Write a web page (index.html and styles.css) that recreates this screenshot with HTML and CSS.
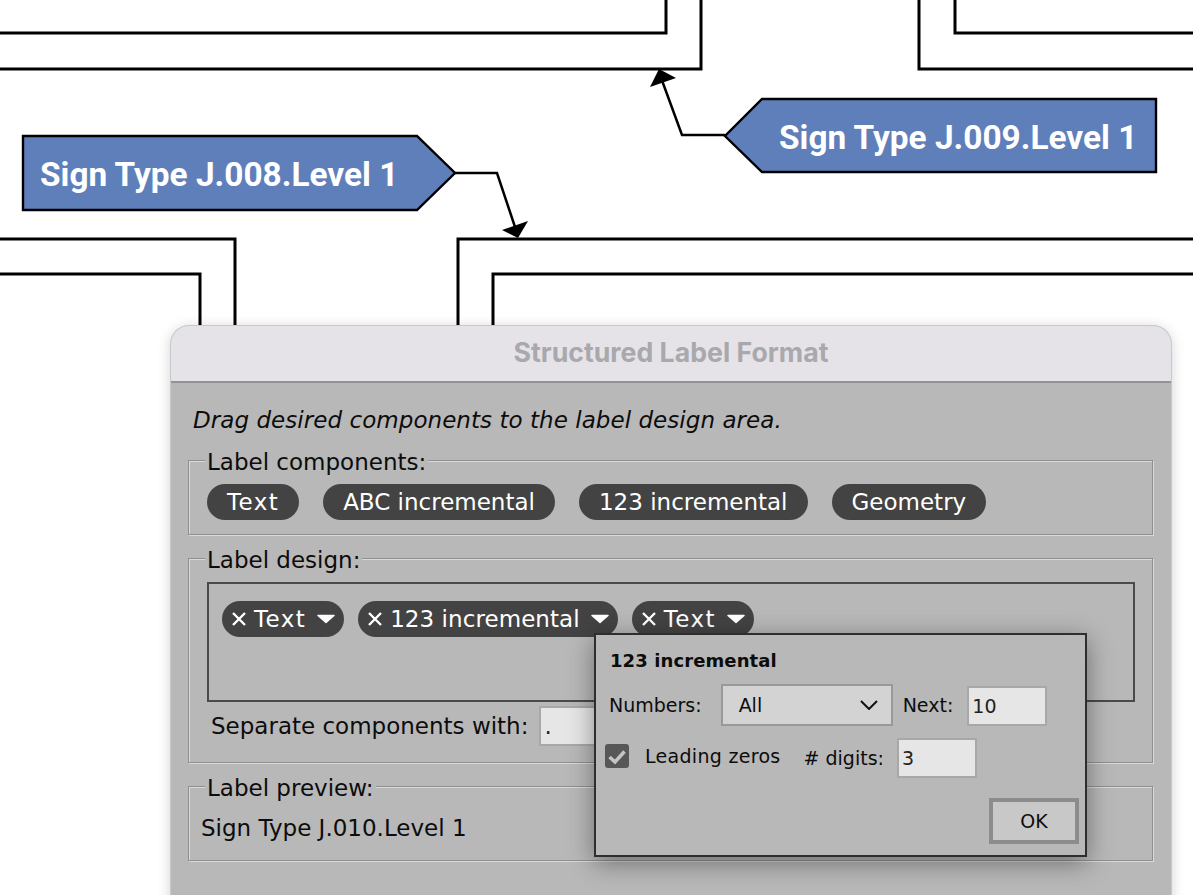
FILE: index.html
```html
<!DOCTYPE html>
<html lang="en">
<head>
<meta charset="utf-8">
<title>Structured Label Format</title>
<link rel="stylesheet" href="styles.css">
</head>
<body>
<div class="canvas">
  <svg class="diagram" width="1193" height="895" viewBox="0 0 1193 895">
    <g class="wall">
      <polyline points="0,33 666,33 666,0"/>
      <polyline points="0,69 701,69 701,0"/>
      <polyline points="955,0 955,33 1193,33"/>
      <polyline points="919,0 919,69 1193,69"/>
      <polyline points="0,239 235,239 235,330"/>
      <polyline points="0,274 200,274 200,330"/>
      <polyline points="1193,239 458,239 458,330"/>
      <polyline points="1193,274 493,274 493,330"/>
    </g>
    <polyline class="leader" points="725,135 682,135 660,75"/>
    <polygon class="head" points="659,69 676,78 650,87"/>
    <polyline class="leader" points="455,173 497,173 516,230"/>
    <polygon class="head" points="518,238 502,230 528,221"/>
    <polygon class="sign" points="23,136 417,136 455,173 417,210 23,210"/>
    <polygon class="sign" points="1156,99 762,99 725,136 762,172 1156,172"/>
    <text class="sign-text" x="40" y="186">Sign Type J.008.Level 1</text>
    <text class="sign-text" x="779" y="149">Sign Type J.009.Level 1</text>
  </svg>

  <section class="dialog">
    <header class="titlebar">Structured Label Format</header>
    <div class="body">
      <p class="hint">Drag desired components to the label design area.</p>

      <div class="group group-components">
        <span class="legend">Label components:</span>
        <div class="chips chips-wide">
          <span class="chip"><span class="spaced">Text</span></span>
          <span class="chip">ABC incremental</span>
          <span class="chip">123 incremental</span>
          <span class="chip">Geometry</span>
        </div>
      </div>

      <div class="group group-design">
        <span class="legend">Label design:</span>
        <div class="design-area">
          <div class="chips chips-tight">
            <span class="chip chip-edit">
              <svg class="x" width="14" height="14" viewBox="0 0 14 14"><path d="M1 1 13 13M13 1 1 13"/></svg>
              <span class="spaced">Text</span>
              <svg class="tri" width="20" height="10" viewBox="0 0 20 10"><path d="M2 1.5H18L10 8.5Z"/></svg>
            </span>
            <span class="chip chip-edit">
              <svg class="x" width="14" height="14" viewBox="0 0 14 14"><path d="M1 1 13 13M13 1 1 13"/></svg>
              <span class="stretched">123 incremental</span>
              <svg class="tri" width="20" height="10" viewBox="0 0 20 10"><path d="M2 1.5H18L10 8.5Z"/></svg>
            </span>
            <span class="chip chip-edit">
              <svg class="x" width="14" height="14" viewBox="0 0 14 14"><path d="M1 1 13 13M13 1 1 13"/></svg>
              <span class="spaced">Text</span>
              <svg class="tri" width="20" height="10" viewBox="0 0 20 10"><path d="M2 1.5H18L10 8.5Z"/></svg>
            </span>
          </div>
        </div>
        <div class="separator">
          <span>Separate components with:</span>
          <span class="field field-sep">.</span>
        </div>
      </div>

      <div class="group group-preview">
        <span class="legend">Label preview:</span>
        <p class="preview">Sign Type J.010.Level 1</p>
      </div>
    </div>

    <div class="popup">
      <h2 class="popup-title">123 incremental</h2>
      <div class="popup-row row-numbers">
        <span>Numbers:</span>
        <span class="select">All
          <svg width="18" height="10" viewBox="0 0 18 10"><path d="M1 1 9 9 17 1"/></svg>
        </span>
        <span>Next:</span>
        <span class="field field-num">10</span>
      </div>
      <div class="popup-row row-zeros">
        <span class="check">
          <svg width="24" height="24" viewBox="0 0 24 24"><path d="M4.5 13 10 18 19.5 7.5"/></svg>
        </span>
        <span class="zeros-label">Leading zeros</span>
        <span class="digits-label"># digits:</span>
        <span class="field field-num">3</span>
      </div>
      <div class="popup-actions">
        <span class="ok">OK</span>
      </div>
    </div>
  </section>
</div>
</body>
</html>
```
FILE: styles.css
```css
* { box-sizing: border-box; }

html, body {
  margin: 0;
  padding: 0;
  background: #fff;
}

.canvas {
  position: relative;
  width: 1193px;
  height: 895px;
  overflow: hidden;
  font-family: "DejaVu Sans", sans-serif;
  font-size: 23px;
  color: #0c0c0c;
}

.diagram { position: absolute; left: 0; top: 0; }

.wall polyline, .leader {
  fill: none;
  stroke: #000;
  stroke-width: 3;
}
.leader { stroke-width: 2.5; }
.head { fill: #000; }
.sign {
  fill: #5f7fbb;
  stroke: #000;
  stroke-width: 2.4;
}
.sign-text {
  font-family: Roboto, sans-serif;
  font-weight: 700;
  font-size: 33.4px;
  fill: #fff;
}

/* Dialog window */
.dialog {
  position: absolute;
  left: 171px;
  top: 326px;
  width: 1000px;
  height: 600px;
  border-radius: 18px 18px 0 0;
  background: #b8b8b8;
  box-shadow: 0 0 0 1px #c9c9c9, 0 2px 14px rgba(0, 0, 0, .2);
}

.titlebar {
  height: 57px;
  background: #e5e3e8;
  border-bottom: 2px solid #929292;
  border-radius: 18px 18px 0 0;
  text-align: center;
  font-family: Inter, sans-serif;
  font-weight: 700;
  font-size: 26.7px;
  line-height: 52px;
  color: #a9a8ad;
}

.body {
  padding: 0 17px;
  display: flex;
  flex-direction: column;
}

.hint {
  margin: 23px 0 0 5px;
  height: 28px;
  line-height: 28px;
  font-style: italic;
  letter-spacing: .05px;
  white-space: nowrap;
}

.group {
  position: relative;
  display: flex;
  flex-direction: column;
  border: 1px solid #8f8f8f;
  box-shadow: 1px 1px 0 #dadada, inset 1px 1px 0 #dadada;
  width: 965px;
}
.group-components { height: 75px; margin-top: 26px; }
.group-design { height: 205px; margin-top: 23px; }
.group-preview { height: 75px; margin-top: 23px; }

.legend {
  align-self: flex-start;
  margin: -13px 0 0 16px;
  padding: 0 2px;
  height: 28px;
  line-height: 28px;
  background: #b8b8b8;
  white-space: nowrap;
}

.chips { display: flex; }
.chips-wide { gap: 24px; margin: 8px 0 0 18px; }
.chips-tight { gap: 14px; padding: 17px 0 0 13px; }

.chip {
  display: inline-flex;
  align-items: center;
  justify-content: center;
  height: 36px;
  padding: 0 20px;
  border-radius: 18px;
  background: #434343;
  color: #fff;
  white-space: nowrap;
}
.chip-edit {
  gap: 8px;
  padding: 0 8px 0 10px;
}
.spaced { letter-spacing: 1.4px; }
.stretched { letter-spacing: .07px; }
.x { fill: none; stroke: #fff; stroke-width: 2.4; }
.tri {
  fill: #fff;
  stroke: #fff;
  stroke-width: 1.5;
  stroke-linejoin: round;
  margin-left: 2px;
}

.design-area {
  width: 928px;
  height: 120px;
  margin: 8px 0 0 18px;
  border: 2px solid #4a4a4a;
}

.separator {
  display: flex;
  align-items: center;
  gap: 11px;
  margin: 4px 0 0 22px;
}

.field {
  display: flex;
  align-items: center;
  background: #e6e6e6;
  border: 2px solid #a8a8a8;
  padding-left: 3px;
  color: #222;
}
.field-sep { width: 100px; height: 40px; }
.field-num { width: 80px; height: 40px; }

.preview {
  margin: 12px 0 0 12px;
  height: 28px;
  line-height: 28px;
  white-space: nowrap;
}

/* Popup over the dialog */
.popup {
  position: absolute;
  left: 423px;
  top: 307px;
  width: 493px;
  height: 224px;
  background: #b8b8b8;
  border: 2px solid #2e2e2e;
  box-shadow: 0 6px 24px rgba(0, 0, 0, .4);
  font-size: 19px;
}

.popup-title {
  margin: 14px 0 0 14px;
  height: 24px;
  line-height: 24px;
  font-size: 18px;
  letter-spacing: .1px;
  font-weight: 700;
}

.popup-row { display: flex; align-items: center; }
.row-numbers { margin: 11px 0 0 13px; height: 42px; }
.row-zeros { margin: 12px 0 0 9px; height: 40px; }

.select {
  display: flex;
  align-items: center;
  justify-content: space-between;
  width: 172px;
  height: 42px;
  margin: 0 10px 0 19px;
  padding: 0 13px 0 16px;
  background: #d3d3d3;
  border: 2px solid #999;
}
.select svg { fill: none; stroke: #111; stroke-width: 2; }
.row-numbers .field { margin-left: 14px; align-self: flex-end; }

.check {
  width: 24px;
  height: 24px;
  margin-bottom: 4px;
  border-radius: 3px;
  background: #575757;
}
.check svg { display: block; fill: none; stroke: #c4c4c4; stroke-width: 3.5; }
.zeros-label { margin: 0 0 4px 16px; letter-spacing: .3px; }
.digits-label { margin-left: 23px; margin-right: 13px; }

.popup-actions {
  display: flex;
  justify-content: flex-end;
  padding: 20px 6px 0 0;
}
.ok {
  display: flex;
  align-items: center;
  justify-content: center;
  width: 90px;
  height: 46px;
  background: #c8c8c8;
  border: 4px solid #8c8c8c;
}
```
